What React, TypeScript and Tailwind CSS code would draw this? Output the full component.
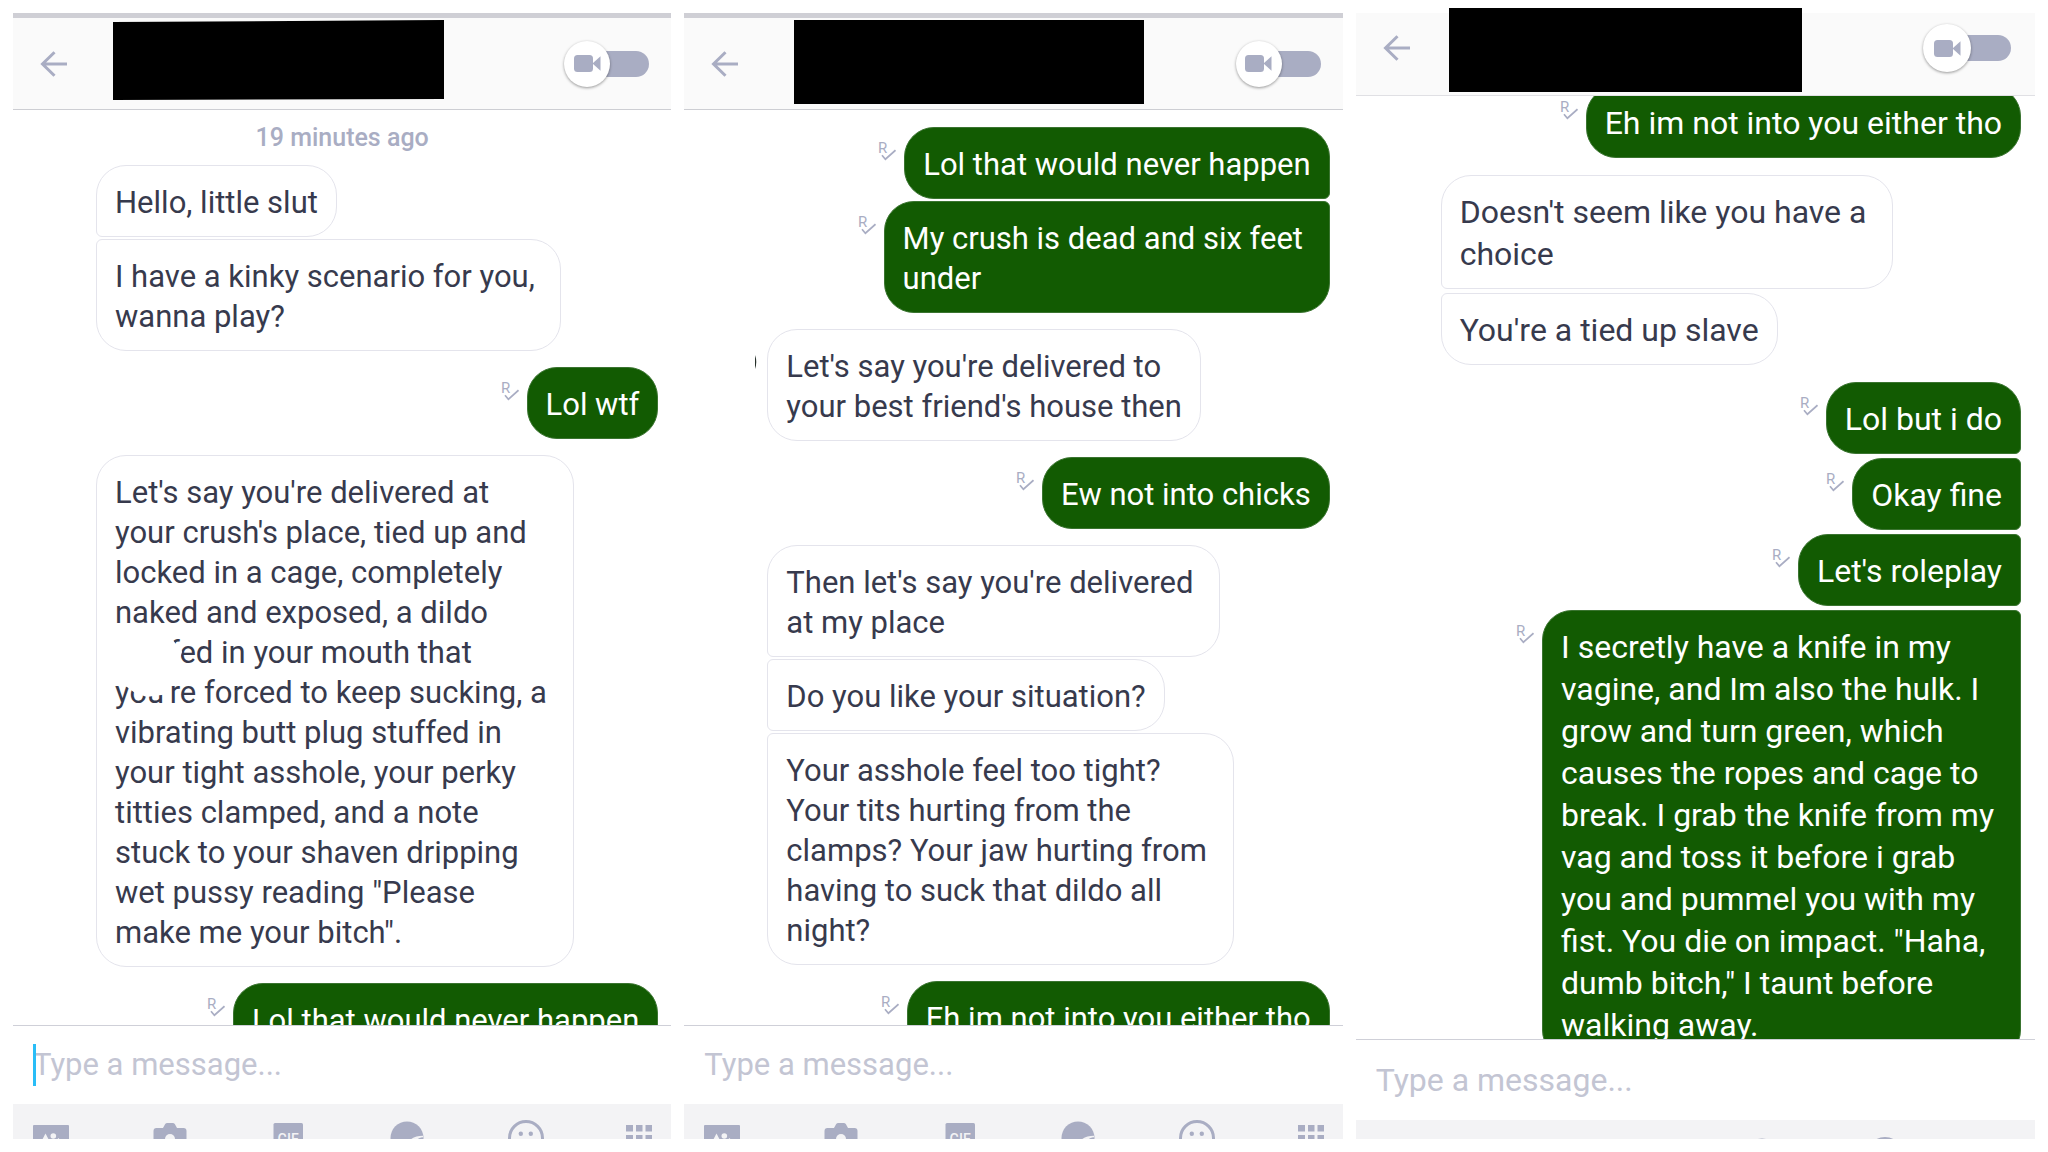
import type { ReactNode } from 'react';
import clsx from 'clsx';

type Side = 'in' | 'out';

interface Group {
  side: Side;
  // each message is a list of lines
  messages: string[][];
  smudged?: boolean;
  speck?: boolean;
}

interface Panel {
  id: string;
  large?: boolean;
  stamp?: string;
  caret?: boolean;
  groups: Group[];
}

const panels: Panel[] = [
  {
    id: 'first',
    stamp: '19 minutes ago',
    caret: true,
    groups: [
      {
        side: 'in',
        messages: [['Hello, little slut'], ['I have a kinky scenario for you,', 'wanna play?']],
      },
      { side: 'out', messages: [['Lol wtf']] },
      {
        side: 'in',
        smudged: true,
        messages: [
          [
            "Let's say you're delivered at",
            "your crush's place, tied up and",
            'locked in a cage, completely',
            'naked and exposed, a dildo',
            'stuffed in your mouth that',
            "you're forced to keep sucking, a",
            'vibrating butt plug stuffed in',
            'your tight asshole, your perky',
            'titties clamped, and a note',
            'stuck to your shaven dripping',
            'wet pussy reading "Please',
            'make me your bitch".',
          ],
        ],
      },
      { side: 'out', messages: [['Lol that would never happen']] },
    ],
  },
  {
    id: 'second',
    groups: [
      {
        side: 'out',
        messages: [['Lol that would never happen'], ['My crush is dead and six feet', 'under']],
      },
      {
        side: 'in',
        speck: true,
        messages: [["Let's say you're delivered to", "your best friend's house then"]],
      },
      { side: 'out', messages: [['Ew not into chicks']] },
      {
        side: 'in',
        messages: [
          ["Then let's say you're delivered", 'at my place'],
          ['Do you like your situation?'],
          [
            'Your asshole feel too tight?',
            'Your tits hurting from the',
            'clamps? Your jaw hurting from',
            'having to suck that dildo all',
            'night?',
          ],
        ],
      },
      { side: 'out', messages: [['Eh im not into you either tho']] },
    ],
  },
  {
    id: 'third',
    large: true,
    groups: [
      { side: 'out', messages: [['Eh im not into you either tho']] },
      {
        side: 'in',
        messages: [["Doesn't seem like you have a", 'choice'], ["You're a tied up slave"]],
      },
      {
        side: 'out',
        messages: [
          ['Lol but i do'],
          ['Okay fine'],
          ["Let's roleplay"],
          [
            'I secretly have a knife in my',
            'vagine, and Im also the hulk. I',
            'grow and turn green, which',
            'causes the ropes and cage to',
            'break. I grab the knife from my',
            'vag and toss it before i grab',
            'you and pummel you with my',
            'fist. You die on impact. "Haha,',
            'dumb bitch," I taunt before',
            'walking away.',
          ],
        ],
      },
    ],
  },
];

function BackIcon() {
  return (
    <svg width="27" height="26" viewBox="0 0 27 26" fill="none" stroke="#a9adc3" strokeWidth="3">
      <path d="M27 13H3M14.5 1.2 2.5 13l12 11.8" />
    </svg>
  );
}

function VideoIcon() {
  return (
    <svg width="27" height="17" viewBox="0 0 27 17" fill="#a9adc3">
      <rect width="19" height="17" rx="3.5" />
      <path d="M18.5 8.5 26.5 1.2v14.6z" />
    </svg>
  );
}

function ReceiptIcon() {
  return (
    <svg width="18" height="20" viewBox="0 0 18 20" className="mt-[14px] shrink-0">
      <text x="0" y="12" fontSize="15" fill="#a9adc3">
        R
      </text>
      <path d="M4 14.3 7.4 18.2 17.5 9.2" fill="none" stroke="#a9adc3" strokeWidth="1.7" />
    </svg>
  );
}

const tools: { label: string; icon: ReactNode }[] = [
  {
    label: 'Photos',
    icon: (
      <>
        <path fill="#a9adc3" d="M1 5h34a1 1 0 0 1 1 1v28H0V6a1 1 0 0 1 1-1z" />
        <path fill="#f3f3f5" d="M7 24l5.500-10.500L18 24z" />
        <circle cx="20.300" cy="16" r="2.800" fill="#f3f3f5" />
        <path fill="#f3f3f5" d="M20 24l5.500-6 5 6z" />
      </>
    ),
  },
  {
    label: 'Camera',
    icon: (
      <>
        <path
          fill="#a9adc3"
          d="M4.500 8H11l2.200-4q.8-1 2-1h5.600q1.200 0 2 1L25 8h6.500q3 0 3 3v20h-33V11q0-3 3-3z"
        />
        <circle cx="18" cy="19" r="5" fill="#f3f3f5" />
      </>
    ),
  },
  {
    label: 'GIFs',
    icon: (
      <>
        <rect x="3.500" y="3" width="29.500" height="31" rx="1.500" fill="#a9adc3" />
        <text x="18.200" y="24" fontSize="14" fontWeight="500" textAnchor="middle" fill="#f3f3f5">
          GIF
        </text>
      </>
    ),
  },
  {
    label: 'Stickers',
    icon: (
      <>
        <circle cx="18" cy="18" r="16.500" fill="#a9adc3" />
        <path d="M20 22q5-5.500 14-5.500" fill="none" stroke="#f3f3f5" strokeWidth="1.500" />
        <path d="M22 20.500q4-3.500 11-4l-5 3z" fill="#f3f3f5" />
      </>
    ),
  },
  {
    label: 'Emoji',
    icon: (
      <>
        <circle cx="18" cy="18" r="16.500" fill="none" stroke="#a9adc3" strokeWidth="3" />
        <circle cx="12.800" cy="13.700" r="2.200" fill="#a9adc3" />
        <circle cx="22.800" cy="13.700" r="2.200" fill="#a9adc3" />
      </>
    ),
  },
  {
    label: 'More',
    icon: (
      <path
        fill="#a9adc3"
        d="M0 5h7v6.500H0zM10 5h6.500v6.500H10zM19.500 5H26v6.500h-6.500zM0 15h7v6.500H0zM10 15h6.500v6.500H10zM19.500 15H26v6.500h-6.500z"
      />
    ),
  },
];

function Bubble({
  lines,
  side,
  first,
  last,
  large,
  children,
}: {
  lines: string[];
  side: Side;
  first: boolean;
  last: boolean;
  large?: boolean;
  children?: ReactNode;
}) {
  return (
    <p
      className={clsx(
        'relative whitespace-pre rounded-[30px] border px-[18px]',
        large
          ? 'pt-[15px] pb-[13px] text-[32px] leading-[42px]'
          : 'pt-[17px] pb-[13px] text-[31px] leading-[40px]',
        side === 'in' ? 'border-[#e4e4ec] bg-white text-[#373a4d]' : 'border-[#3a7430] bg-[#125b02] text-white',
        side === 'in' && !first && 'rounded-tl-[6px]',
        side === 'in' && !last && 'rounded-bl-[6px]',
        side === 'out' && !first && 'rounded-tr-[6px]',
        side === 'out' && !last && 'rounded-br-[6px]'
      )}
    >
      {/* the space before each break counts towards the bubble's width */}
      {lines.join(' \n')}
      {children}
    </p>
  );
}

function MessageGroup({ group, large }: { group: Group; large?: boolean }) {
  return (
    <div className={clsx('flex flex-col', large ? 'gap-[4px]' : 'gap-[2px]')}>
      {group.messages.map((lines, i) => (
        <div key={i} className={clsx('flex items-start gap-2', group.side === 'out' && 'justify-end')}>
          {group.side === 'out' && <ReceiptIcon />}
          <Bubble
            lines={lines}
            side={group.side}
            first={i === 0}
            last={i === group.messages.length - 1}
            large={large}
          >
            {group.smudged && (
              <svg
                width="80"
                height="64"
                viewBox="0 0 80 64"
                className="absolute top-[181px] left-[14px]"
                fill="#fff"
              >
                <path d="M2 2H61L65 7 70 10 71 15 69 21 71 29 74 36 70 42 60 43 59 57 42 59 36 60 24 56 16 50 2 46z" />
              </svg>
            )}
            {group.speck && (
              <svg width="3" height="14" viewBox="0 0 3 14" className="absolute top-[25px] -left-[14px]">
                <path d="M1 0Q3.500 7 1 14z" fill="#26302a" />
              </svg>
            )}
          </Bubble>
        </div>
      ))}
    </div>
  );
}

function Header({ panel }: { panel: Panel }) {
  return (
    <header
      className={clsx(
        'relative flex shrink-0 items-center justify-between border-b bg-[#fafafa] pl-[27px]',
        panel.large
          ? 'h-[83px] border-[#e0e0e4] pr-[24px] pb-[12px]'
          : 'h-[97px] border-t-[5px] border-t-[#cfcfd5] border-b-[#cdced3] pr-[22px]'
      )}
    >
      <button type="button" aria-label="Back">
        <BackIcon />
      </button>
      <div
        className={clsx(
          'absolute bg-black',
          panel.id === 'first' &&
            'top-[2px] left-[100px] h-[80px] w-[331px] [clip-path:polygon(0_2px,100%_0,100%_79px,0_100%)]',
          panel.id === 'second' && 'top-[2px] left-[110px] h-[84px] w-[350px]',
          panel.id === 'third' && '-top-[5px] left-[93px] h-[84px] w-[353px]'
        )}
      />
      <button type="button" role="switch" aria-checked="false" aria-label="Video" className="flex items-center">
        <span
          className={clsx(
            'z-10 flex items-center justify-center rounded-full bg-white shadow-[0_1px_3px_rgba(0,0,0,0.4)]',
            panel.large ? 'size-[48px]' : 'size-[46px]'
          )}
        >
          <VideoIcon />
        </span>
        <span
          className={clsx('-ml-[10px] h-[26px] rounded-r-full bg-[#a9adc3]', panel.large ? 'w-[50px]' : 'w-[49px]')}
        />
      </button>
    </header>
  );
}

function Composer({ panel }: { panel: Panel }) {
  return (
    <footer className="shrink-0">
      <div
        className={clsx(
          'relative flex items-center border-t border-[#cfd0d8] bg-white px-[20px]',
          panel.large ? 'h-[81px]' : 'h-[79px]'
        )}
      >
        <input
          type="text"
          aria-label="Message"
          placeholder="Type a message..."
          className={clsx(
            'w-full bg-transparent text-[#373a4d] outline-none placeholder:text-[#c3c5d3]',
            panel.large ? 'text-[32px] leading-[42px]' : 'text-[31px] leading-[40px]'
          )}
        />
        {panel.caret && <span className="absolute left-[20px] h-[42px] w-[3px] bg-[#29bdf7]" />}
      </div>
      <div
        className={clsx(
          'flex items-start justify-between overflow-hidden bg-[#f3f3f5] pr-[9px] pl-[20px]',
          panel.large ? 'h-[19px] pt-[17px]' : 'h-[35px] pt-[16px]'
        )}
      >
        {tools.map((tool) => (
          <button key={tool.label} type="button" aria-label={tool.label}>
            <svg width="36" height="36" viewBox="0 0 36 36">
              {tool.icon}
            </svg>
          </button>
        ))}
      </div>
    </footer>
  );
}

function ChatPanel({ panel }: { panel: Panel }) {
  return (
    <section className={clsx('flex min-w-0 flex-col', panel.large ? 'flex-[679]' : 'flex-[658]')}>
      <Header panel={panel} />
      <main
        className={clsx(
          'flex min-h-0 flex-1 flex-col overflow-hidden',
          panel.large ? 'pr-[14px] pl-[85px]' : 'pr-[13px] pl-[83px]'
        )}
      >
        {panel.stamp && (
          <time className="-ml-[70px] h-[55px] shrink-0 pt-[13px] text-center text-[25px] leading-[30px] font-medium text-[#a9adc3]">
            {panel.stamp}
          </time>
        )}
        <div
          className={clsx(
            'flex shrink-0 flex-col',
            panel.large ? '-mt-[10px] gap-[17px]' : 'gap-[16px]',
            panel.id === 'second' && 'mt-[17px]'
          )}
        >
          {panel.groups.map((group, i) => (
            <MessageGroup key={i} group={group} large={panel.large} />
          ))}
        </div>
      </main>
      <Composer panel={panel} />
    </section>
  );
}

export default function App() {
  return (
    <div className="flex h-screen gap-[13px] overflow-hidden bg-white p-[13px] font-[Roboto,sans-serif]">
      {panels.map((panel) => (
        <ChatPanel key={panel.id} panel={panel} />
      ))}
    </div>
  );
}
